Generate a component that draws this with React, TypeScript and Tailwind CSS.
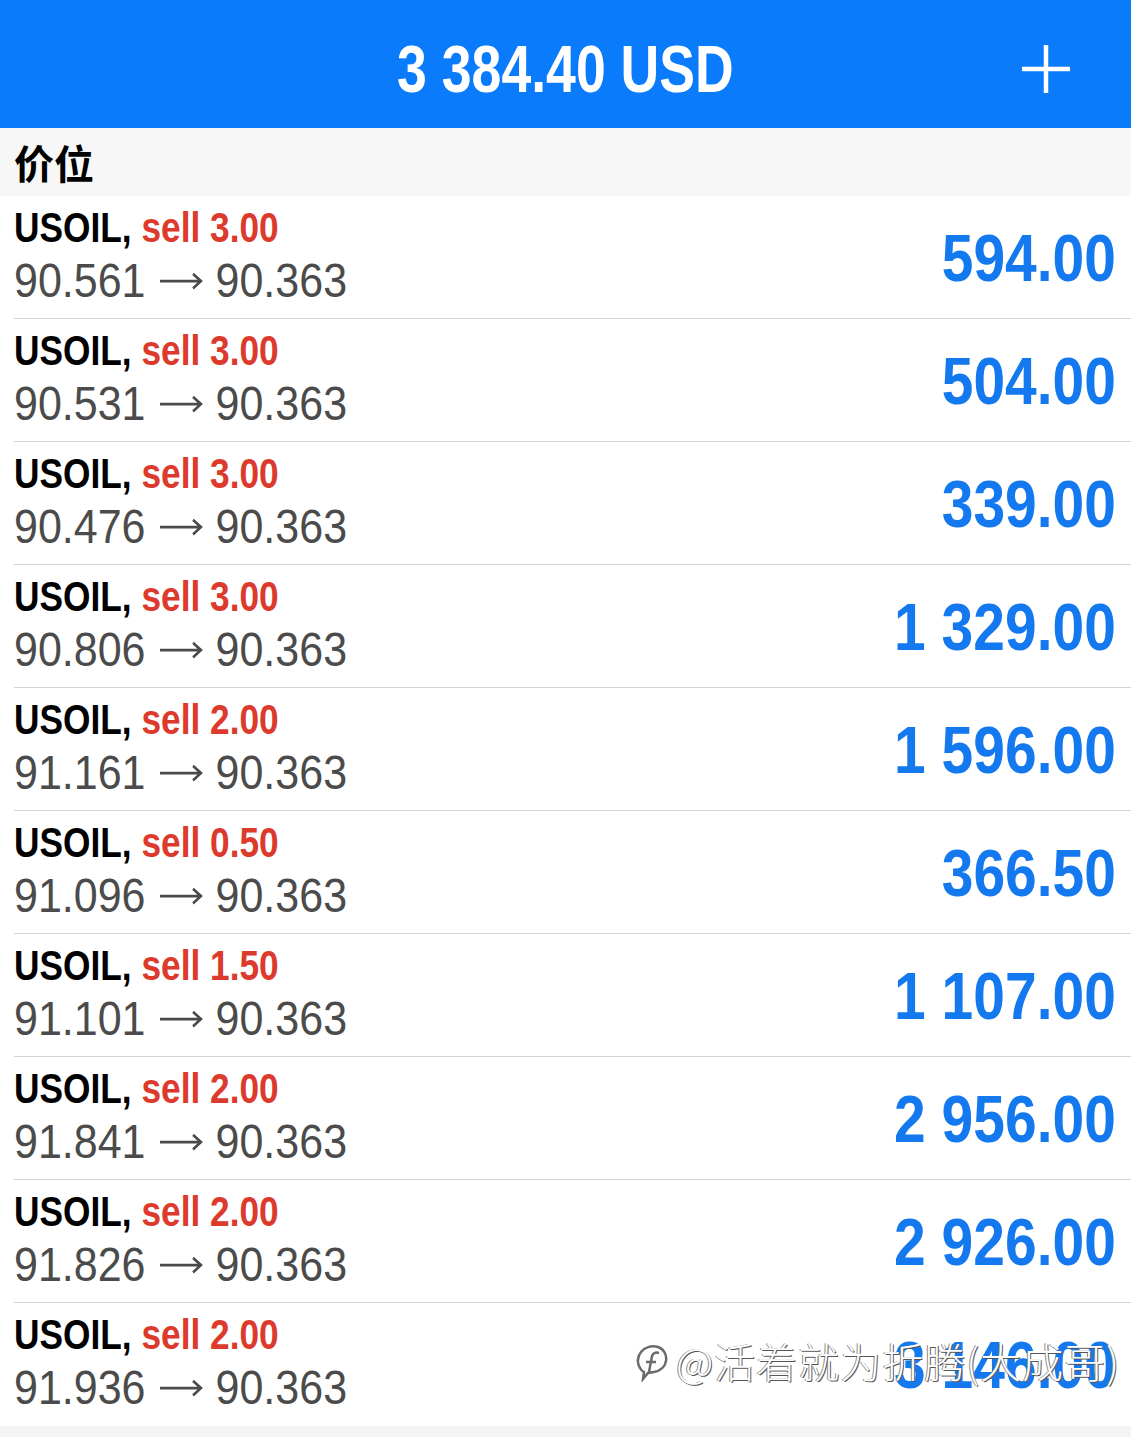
type Position = {
  symbol: string;
  side: string;
  open: string;
  current: string;
  profit: string;
};

const positions: Position[] = [
  { symbol: "USOIL", side: "sell 3.00", open: "90.561", current: "90.363", profit: "594.00" },
  { symbol: "USOIL", side: "sell 3.00", open: "90.531", current: "90.363", profit: "504.00" },
  { symbol: "USOIL", side: "sell 3.00", open: "90.476", current: "90.363", profit: "339.00" },
  { symbol: "USOIL", side: "sell 3.00", open: "90.806", current: "90.363", profit: "1 329.00" },
  { symbol: "USOIL", side: "sell 2.00", open: "91.161", current: "90.363", profit: "1 596.00" },
  { symbol: "USOIL", side: "sell 0.50", open: "91.096", current: "90.363", profit: "366.50" },
  { symbol: "USOIL", side: "sell 1.50", open: "91.101", current: "90.363", profit: "1 107.00" },
  { symbol: "USOIL", side: "sell 2.00", open: "91.841", current: "90.363", profit: "2 956.00" },
  { symbol: "USOIL", side: "sell 2.00", open: "91.826", current: "90.363", profit: "2 926.00" },
  { symbol: "USOIL", side: "sell 2.00", open: "91.936", current: "90.363", profit: "3 146.00" },
];

function Arrow() {
  return (
    <svg
      width="44"
      height="20"
      viewBox="0 0 44 20"
      className="mx-[13px] inline-block align-[4px]"
      aria-hidden="true"
    >
      <path d="M1 10h41M34 3.5l8 6.5-8 6.5" stroke="#4b4b4b" strokeWidth="2.4" fill="none" />
    </svg>
  );
}

function PositionRow({ p, last }: { p: Position; last: boolean }) {
  return (
    <div className="pl-[14px]">
      <div
        className={
          "flex h-[123px] items-center justify-between pr-[15px] " +
          (last ? "" : "border-b border-[#d4d4d4]")
        }
      >
        <div className="self-start pt-[10px]">
          <div className="h-[44px] leading-[44px]">
            <span className="inline-block origin-left scale-x-[0.84] whitespace-nowrap text-[42px] font-bold text-black">
              {p.symbol}, <span className="text-[#dc3a2c]">{p.side}</span>
            </span>
          </div>
          <div className="h-[60px] leading-[60px]">
            <span className="inline-block origin-left scale-y-[1.12] whitespace-nowrap text-[43px] text-[#4b4b4b]">
              {p.open}
              <Arrow />
              {p.current}
            </span>
          </div>
        </div>
        <span className="inline-block origin-right scale-x-[0.85] whitespace-nowrap text-[67px] font-bold leading-none text-[#1479ee]">
          {p.profit}
        </span>
      </div>
    </div>
  );
}

function WeiboMark() {
  return (
    <svg width="40" height="44" viewBox="0 0 40 44" fill="none" aria-hidden="true">
      <path
        d="M8 30c-3-4-3-11 1-16 4-5 11-7 17-5 6 2 9 8 8 14-1 6-6 10-12 11l-6 1-5 6 1-7c-2-1-3-2-4-4z"
        stroke="#6b6b6b"
        strokeWidth="2.5"
        fill="white"
      />
      <path d="M17 34l3-16c1-3 4-4 7-3" stroke="#6b6b6b" strokeWidth="2.5" />
      <path d="M14 24h10" stroke="#6b6b6b" strokeWidth="2.5" />
    </svg>
  );
}

export default function App() {
  return (
    <div className="relative min-h-[1437px] bg-[#f4f4f4] font-['Liberation_Sans','Noto_Sans_CJK_SC',sans-serif]">
      <header className="grid h-[128px] grid-cols-[1fr_auto_1fr] items-center bg-[#0a7bfa] pt-[9px] text-white">
        <div />
        <h1 className="inline-block origin-center scale-x-[0.8] whitespace-nowrap text-[67px] font-bold leading-none">
          3 384.40 USD
        </h1>
        <div className="flex justify-end pr-[61px]">
          <svg width="48" height="48" viewBox="0 0 48 48" aria-hidden="true">
            <path d="M24 0v48M0 24h48" stroke="white" strokeWidth="4.5" />
          </svg>
        </div>
      </header>

      <div className="flex h-[68px] items-center bg-[#f7f7f7] pl-[14px]">
        <span className="font-['Noto_Sans_CJK_SC',sans-serif] text-[40px] font-bold leading-none text-black">
          价位
        </span>
      </div>

      <div className="bg-white">
        {positions.map((p, i) => (
          <PositionRow key={i} p={p} last={i === positions.length - 1} />
        ))}
      </div>

      {/* watermark over the last row */}
      <div className="pointer-events-none absolute left-[632px] top-[1338px] flex items-center gap-[4px] whitespace-nowrap font-['Noto_Sans_CJK_SC',sans-serif] text-[41px] font-light leading-none tracking-[1px] text-white [text-shadow:1px_1px_0_#555,-1px_0_0_#888]">
        <WeiboMark />
        <span>@活着就为折腾(大成哥)</span>
      </div>
    </div>
  );
}
